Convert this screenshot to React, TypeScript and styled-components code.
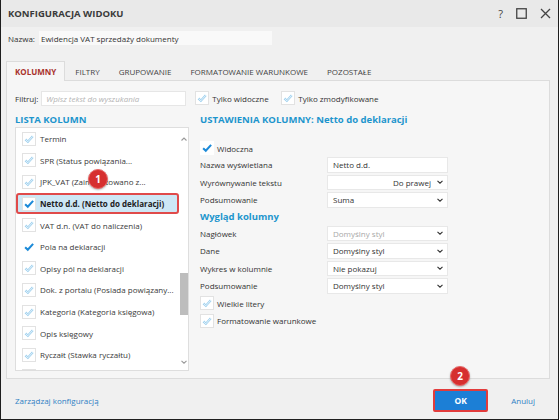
import React from 'react';
import styled, { createGlobalStyle } from 'styled-components';

const GlobalStyle = createGlobalStyle`
  html, body { margin: 0; padding: 0; background: #f0f0f0; }
  #root { width: 559px; height: 420px; }
  * { box-sizing: border-box; }
`;

const Dialog = styled.div`
  position: relative;
  width: 559px;
  height: 420px;
  display: flex;
  flex-direction: column;
  background: #f0f0f0;
  border: 1px solid #1e1e1e;
  border-top: none;
  font-family: "Open Sans", "Noto Sans", sans-serif;
  font-size: 8px;
  color: #333;
  overflow: hidden;
`;

const TitleBar = styled.div`
  height: 27px;
  flex-shrink: 0;
  display: flex;
  align-items: center;
  justify-content: space-between;
  padding: 0 7px 0 7px;
  background: #e9e9e9;
`;

const Title = styled.div`
  font-weight: 700;
  font-size: 9.5px;
  color: #3a3a3a;
`;

const WinButtons = styled.div`
  display: flex;
  align-items: center;
  gap: 13px;
  color: #444;
  font-size: 11px;
`;

const NameRow = styled.div`
  display: flex;
  align-items: center;
  flex-shrink: 0;
  height: 14px;
  margin-top: 4px;
  padding-left: 7px;
`;

const NameInput = styled.div`
  width: 233px;
  height: 14px;
  margin-left: 4px;
  padding-left: 2px;
  background: #f9f9f9;
  display: flex;
  align-items: center;
`;

const Tabs = styled.div`
  display: flex;
  flex-shrink: 0;
  height: 19px;
  margin-top: 16px;
  padding-left: 5px;
`;

const Tab = styled.div<{ $active?: boolean }>`
  display: flex;
  align-items: center;
  padding: 0 8px;
  margin-right: 1px;
  font-size: 8px;
  font-weight: ${(p) => (p.$active ? 700 : 400)};
  color: ${(p) => (p.$active ? '#a8322c' : '#444')};
  background: ${(p) => (p.$active ? '#f6f6f6' : 'transparent')};
  border: 1px solid ${(p) => (p.$active ? '#dcdcdc' : 'transparent')};
  border-bottom: none;
  position: relative;
  z-index: 1;
  margin-bottom: -1px;
`;

const Panel = styled.div`
  flex: 1;
  min-height: 0;
  margin: 0 8px 0 5px;
  background: #f6f6f6;
  border: 1px solid #dcdcdc;
  padding: 9px 8px 7px 8px;
  display: flex;
  flex-direction: column;
`;

const FilterRow = styled.div`
  display: flex;
  align-items: center;
  flex-shrink: 0;
  height: 16px;
`;

const FilterInput = styled.div`
  width: 145px;
  height: 15px;
  margin-left: 3px;
  background: #fff;
  border: 1px solid #e6e6e6;
  display: flex;
  align-items: center;
  padding-left: 4px;
  font-style: italic;
  color: #b4b4b4;
`;

const CheckLabel = styled.div<{ $width?: number }>`
  display: flex;
  align-items: center;
  gap: 3px;
  width: ${(p) => (p.$width ? `${p.$width}px` : 'auto')};
`;

const Columns = styled.div`
  display: flex;
  flex: 1;
  margin-top: 6px;
  min-height: 0;
`;

const LeftCol = styled.div`
  width: 174px;
  min-height: 0;
  display: flex;
  flex-direction: column;
`;

const RightCol = styled.div`
  margin-left: 11px;
  display: flex;
  flex-direction: column;
`;

const Heading = styled.div<{ $gapTop?: number }>`
  height: 15px;
  margin-top: ${(p) => p.$gapTop ?? 0}px;
  display: flex;
  align-items: center;
  font-size: 9.5px;
  font-weight: 700;
  color: #1d95cd;
  flex-shrink: 0;
`;

const ListBox = styled.div`
  flex: 1;
  min-height: 0;
  display: flex;
  background: #fff;
  border: 1px solid #dedede;
  overflow: hidden;
`;

const Items = styled.div`
  flex: 1;
`;

const Row = styled.div<{ $selected?: boolean }>`
  height: 21.6px;
  display: flex;
  align-items: center;
  padding-left: ${(p) => (p.$selected ? 4 : 6)}px;
  gap: 4px;
  white-space: nowrap;
  font-weight: ${(p) => (p.$selected ? 700 : 400)};
  color: ${(p) => (p.$selected ? '#222' : '#3a3a3a')};
  background: ${(p) => (p.$selected ? '#cde7f5' : 'transparent')};
  border: ${(p) => (p.$selected ? '2px solid #e04a4a' : 'none')};
  border-radius: ${(p) => (p.$selected ? '3px' : '0')};
`;

const ScrollBar = styled.div`
  width: 9px;
  display: flex;
  flex-direction: column;
  align-items: center;
`;

const Thumb = styled.div`
  width: 8px;
  height: 42px;
  margin-top: 130px;
  background: #bdbdbd;
`;

const Spacer = styled.div`
  flex: 1;
`;

const Box = styled.span<{ $border?: boolean }>`
  width: 14px;
  height: 14px;
  flex-shrink: 0;
  display: inline-flex;
  align-items: center;
  justify-content: center;
  background: #fff;
  border: 1px solid ${(p) => (p.$border === false ? 'transparent' : '#e2e2e2')};
`;

const FormRow = styled.div`
  display: flex;
  align-items: center;
  flex-shrink: 0;
  height: 15.5px;
  margin-top: 2px;
`;

const Label = styled.div`
  width: 127px;
`;

const Control = styled.div<{ $align?: 'left' | 'right'; $muted?: boolean }>`
  width: 121px;
  height: 15.5px;
  background: #fff;
  border: 1px solid #e8e8e8;
  display: flex;
  align-items: center;
  justify-content: ${(p) => (p.$align === 'right' ? 'flex-end' : 'flex-start')};
  padding: 0 4px 0 5px;
  gap: 6px;
  color: ${(p) => (p.$muted ? '#a8a8a8' : '#333')};
`;

const ControlText = styled.span<{ $grow?: boolean }>`
  flex: ${(p) => (p.$grow ? 1 : 'none')};
`;

const Footer = styled.div`
  height: 40px;
  flex-shrink: 0;
  display: flex;
  align-items: center;
  justify-content: space-between;
  padding: 2px 23px 0 14px;
`;

const Link = styled.a`
  color: #2f80c4;
  font-size: 8px;
  text-decoration: none;
`;

const Actions = styled.div`
  display: flex;
  align-items: center;
  gap: 23px;
`;

const OkButton = styled.button`
  width: 55px;
  height: 23px;
  background: #1c7fd6;
  border: 2px solid #e23c3c;
  border-radius: 2px;
  color: #fff;
  font-family: inherit;
  font-weight: 700;
  font-size: 8.5px;
  padding: 0;
`;

const Badge = styled.div<{ $x: number; $y: number }>`
  position: absolute;
  left: ${(p) => p.$x}px;
  top: ${(p) => p.$y}px;
  width: 20px;
  height: 20px;
  border-radius: 50%;
  background: #d62f2f;
  border: 1px solid #e86a6a;
  box-shadow: 0 1px 2px rgba(0, 0, 0, 0.3);
  color: #fff;
  font-weight: 700;
  font-size: 10px;
  display: flex;
  align-items: center;
  justify-content: center;
  z-index: 5;
`;

const Check = ({ on }: { on?: boolean }) =>
  on ? (
    <svg width="14" height="14" viewBox="0 0 14 14">
      <path d="M2.5 7.2 L5.6 10.2 L11.8 3.4" fill="none" stroke="#1c8ad8" strokeWidth="2.4" />
    </svg>
  ) : (
    <svg width="14" height="14" viewBox="0 0 14 14">
      <path d="M2.8 7.4 L5.7 10.2 L11.4 3.8" fill="none" stroke="#9ccfee" strokeWidth="2.6" />
      <path d="M2.8 7.4 L5.7 10.2 L11.4 3.8" fill="none" stroke="#f2f9fd" strokeWidth="1" />
    </svg>
  );

const Chevron = ({ up, color = '#333' }: { up?: boolean; color?: string }) => (
  <svg width="6" height="4" viewBox="0 0 6 4">
    <path d={up ? 'M0.5 3.5 L3 1 L5.5 3.5' : 'M0.5 0.8 L3 3.2 L5.5 0.8'} fill="none" stroke={color} strokeWidth="1.1" />
  </svg>
);

const listItems = [
  { name: 'Termin' },
  { name: 'SPR (Status powiązania...' },
  { name: 'JPK_VAT (Zaimportowano z...' },
  { name: 'Netto d.d. (Netto do deklaracji)', on: true, selected: true },
  { name: 'VAT d.n. (VAT do naliczenia)' },
  { name: 'Pola na deklaracji', on: true, plain: true },
  { name: 'Opisy pól na deklaracji' },
  { name: 'Dok. z portalu (Posiada powiązany...' },
  { name: 'Kategoria (Kategoria księgowa)' },
  { name: 'Opis księgowy' },
  { name: 'Ryczałt (Stawka ryczałtu)' },
  { name: '' },
];

const formRows = [
  { label: 'Nazwa wyświetlana', value: 'Netto d.d.', input: true },
  { label: 'Wyrównywanie tekstu', value: 'Do prawej', align: 'right' as const },
  { label: 'Podsumowanie', value: 'Suma' },
];

const lookRows = [
  { label: 'Nagłówek', value: 'Domyślny styl', muted: true },
  { label: 'Dane', value: 'Domyślny styl' },
  { label: 'Wykres w kolumnie', value: 'Nie pokazuj' },
  { label: 'Podsumowanie', value: 'Domyślny styl' },
];

type SelectProps = { value: string; align?: 'left' | 'right'; muted?: boolean; input?: boolean };

const Select = ({ value, align, muted, input }: SelectProps) => (
  <Control $align={align} $muted={muted}>
    <ControlText $grow={align !== 'right'}>{value}</ControlText>
    {!input && <Chevron />}
  </Control>
);

const App = () => {
  return (
    <>
      <GlobalStyle />
      <Dialog>
        <TitleBar>
          <Title>KONFIGURACJA WIDOKU</Title>
          <WinButtons>
            <span>?</span>
            <svg width="11" height="11" viewBox="0 0 11 11">
              <rect x="0.75" y="0.75" width="9.5" height="9.5" fill="none" stroke="#444" strokeWidth="1.3" />
            </svg>
            <svg width="11" height="11" viewBox="0 0 11 11">
              <path d="M1 1 L10 10 M10 1 L1 10" stroke="#444" strokeWidth="1.3" />
            </svg>
          </WinButtons>
        </TitleBar>

        <NameRow>
          <span>Nazwa:</span>
          <NameInput>Ewidencja VAT sprzedaży dokumenty</NameInput>
        </NameRow>

        <Tabs>
          <Tab $active>KOLUMNY</Tab>
          <Tab>FILTRY</Tab>
          <Tab>GRUPOWANIE</Tab>
          <Tab>FORMATOWANIE WARUNKOWE</Tab>
          <Tab>POZOSTAŁE</Tab>
        </Tabs>

        <Panel>
          <FilterRow>
            <span>Filtruj:</span>
            <FilterInput>Wpisz tekst do wyszukania</FilterInput>
            <CheckLabel $width={86} style={{ marginLeft: 9 }}>
              <Box><Check /></Box>
              Tylko widoczne
            </CheckLabel>
            <CheckLabel>
              <Box><Check /></Box>
              Tylko zmodyfikowane
            </CheckLabel>
          </FilterRow>

          <Columns>
            <LeftCol>
              <Heading>LISTA KOLUMN</Heading>
              <ListBox>
                <Items>
                  {listItems.map((item, i) => (
                    <Row key={i} $selected={item.selected}>
                      <Box $border={!item.plain}>
                        <Check on={item.on} />
                      </Box>
                      {item.name}
                    </Row>
                  ))}
                </Items>
                <ScrollBar>
                  <div style={{ marginTop: 4 }}>
                    <Chevron up color="#999" />
                  </div>
                  <Thumb />
                  <Spacer />
                  <div style={{ marginBottom: 4 }}>
                    <Chevron color="#999" />
                  </div>
                </ScrollBar>
              </ListBox>
            </LeftCol>

            <RightCol>
              <Heading>USTAWIENIA KOLUMNY: Netto do deklaracji</Heading>
              <CheckLabel style={{ marginTop: 14, height: 14 }}>
                <Box $border={false}><Check on /></Box>
                Widoczna
              </CheckLabel>
              {formRows.map((r) => (
                <FormRow key={r.label}>
                  <Label>{r.label}</Label>
                  <Select value={r.value} align={r.align} input={r.input} />
                </FormRow>
              ))}
              <Heading $gapTop={1}>Wygląd kolumny</Heading>
              {lookRows.map((r, i) => (
                <FormRow key={i}>
                  <Label>{r.label}</Label>
                  <Select value={r.value} muted={r.muted} />
                </FormRow>
              ))}
              <FormRow>
                <CheckLabel>
                  <Box><Check /></Box>
                  Wielkie litery
                </CheckLabel>
              </FormRow>
              <FormRow>
                <CheckLabel>
                  <Box><Check /></Box>
                  Formatowanie warunkowe
                </CheckLabel>
              </FormRow>
            </RightCol>
          </Columns>
        </Panel>

        <Footer>
          <Link href="#">Zarządzaj konfiguracją</Link>
          <Actions>
            <OkButton>OK</OkButton>
            <Link href="#">Anuluj</Link>
          </Actions>
        </Footer>

        <Badge $x={87} $y={169}>1</Badge>
        <Badge $x={449} $y={366}>2</Badge>
      </Dialog>
    </>
  );
};

export default App;
